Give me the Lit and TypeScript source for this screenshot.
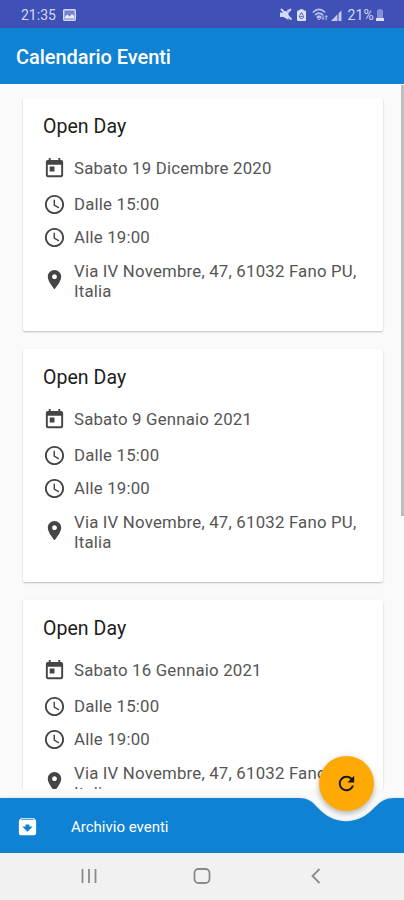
import { LitElement, html, css, svg } from "lit";
import { customElement, property } from "lit/decorators.js";

const paths = {
  event: "M19 3h-1V1h-2v2H8V1H6v2H5c-1.11 0-1.99.9-1.99 2L3 19c0 1.1.89 2 2 2h14c1.1 0 2-.9 2-2V5c0-1.1-.9-2-2-2zm0 16H5V8h14v11zM7 10h5v5H7z",
  clock: "M11.99 2C6.47 2 2 6.48 2 12s4.47 10 9.99 10C17.52 22 22 17.52 22 12S17.52 2 11.99 2zM12 20c-4.42 0-8-3.58-8-8s3.58-8 8-8 8 3.58 8 8-3.58 8-8 8zm.5-13H11v6l5.25 3.15.75-1.23-4.5-2.67z",
  place: "M12 2C8.13 2 5 5.13 5 9c0 5.25 7 13 7 13s7-7.75 7-13c0-3.87-3.13-7-7-7zm0 9.5c-1.38 0-2.5-1.12-2.5-2.5s1.12-2.5 2.5-2.5 2.5 1.12 2.5 2.5-1.12 2.5-2.5 2.5z",
  archive: "M20.54 5.23l-1.39-1.68C18.88 3.21 18.47 3 18 3H6c-.47 0-.88.21-1.16.55L3.46 5.23C3.17 5.57 3 6.02 3 6.5V19c0 1.1.9 2 2 2h14c1.1 0 2-.9 2-2V6.5c0-.48-.17-.93-.46-1.27zM12 17.5L6.5 12H10v-2h4v2h3.5L12 17.5zM5.12 5l.81-1h12l.94 1H5.12z",
  refresh: "M17.65 6.35C16.2 4.9 14.21 4 12 4c-4.42 0-7.99 3.58-7.99 8s3.57 8 7.99 8c3.73 0 6.84-2.55 7.73-6h-2.08c-.82 2.33-3.04 4-5.65 4-3.31 0-6-2.69-6-6s2.69-6 6-6c1.66 0 3.14.69 4.22 1.78L13 11h7V4l-2.35 2.35z",
};

const icon = (d: string, size: number) =>
  html`<svg width=${size} height=${size} viewBox="0 0 24 24" fill="currentColor">${svg`<path d=${d} />`}</svg>`;

@customElement("status-bar")
class StatusBar extends LitElement {
  static styles = css`
    :host { display: flex; align-items: center; height: 28px; flex: none; background: #3f51b5; color: #d3d8f5;
      padding: 1px 20px 0 21px; box-sizing: border-box; font-size: 14px; }
    .time { margin-right: 7px; }
    .space { flex: 1; }
    svg { display: block; }
    .icons { display: flex; align-items: center; }
    .mute { margin-right: 5px; }
    .saver { margin-right: 6px; }
    .wifi { margin-right: 3px; }
    .signal { margin-right: 5px; }
    .level { margin-right: 2px; letter-spacing: 0.2px; }
  `;
  render() {
    return html`
      <span class="time">21:35</span>
      <svg width="13" height="12" viewBox="0 0 13 12"><rect x=".7" y=".7" width="11.6" height="10.6" rx="1" fill="#7681cf" stroke="#d3d8f5" stroke-width="1.4"/><path d="M2 9.5V7.5L4.5 5.5 6.5 7.5 9 5l2.2 2v2.5z" fill="#e6e9fb"/></svg>
      <span class="space"></span>
      <div class="icons">
        <svg class="mute" width="12" height="13" viewBox="0 0 12 13"><path d="M0 4.500h3.500L8.500 1v11L3.500 9H0z" fill="#d3d8f5"/><path d="M5 1l7 7" stroke="#3f51b5" stroke-width="1.2"/><path d="M1 1L11.500 11.500M7 5l4-4" stroke="#d3d8f5" stroke-width="1.8"/></svg>
        <svg class="saver" width="9" height="12" viewBox="0 0 9 12"><path d="M2 1.500Q2.500 0 4.500 0T7 1.500H8q1 0 1 1V11q0 1-1 1H1q-1 0-1-1V2.500q0-1 1-1z" fill="#dfe3fa"/><path d="M4.500 3.500L2.800 6.500a2 2 0 1 0 3.400 0zM3.500 7.500h2" fill="none" stroke="#4e5dba"/></svg>
        <svg class="wifi" width="16" height="13" viewBox="0 0 16 13"><path d="M.8 4.500Q7-1.800 13.200 4.500M3 7q4-4 8 0M5 9.200q2-2 4 0" fill="none" stroke="#b9c1ec" stroke-width="1.7"/><path d="M7 12l2-2.500H5zM11 7v4M9.500 9.800l1.500 1.700 1.500-1.700M14.200 12V8M12.900 9l1.300-1.500L15.500 9" fill="none" stroke="#b9c1ec"/></svg>
        <svg class="signal" width="11" height="12" viewBox="0 0 11 12"><path d="M0 12L11 1v11z" fill="#7c87d1"/><path d="M0 12L6 6v6zM8 4l2-2v10H8z" fill="#c5ccf1"/></svg>
        <span class="level">21%</span>
        <svg width="8" height="12" viewBox="0 0 8 12"><path d="M2.500 1V0h3v1H7v9H1V1z" fill="#8690d5"/><path d="M0 9h8v3H0z" fill="#dfe3fa"/></svg>
      </div>`;
  }
}

@customElement("event-card")
class EventCard extends LitElement {
  @property() day = "";
  static styles = css`
    :host { display: block; flex: none; box-sizing: border-box; height: 233px; margin: 0 21px 18px 23px; padding: 17px 20px 0;
      background: #fff; border-radius: 2px; color: #555; box-shadow: 0 1px 2px rgba(0, 0, 0, 0.25); }
    h2 { margin: 0 0 17px; font: 400 19.5px/24px Roboto, sans-serif; letter-spacing: 0.05px; color: #1c1c1c; }
    .row { display: flex; align-items: center; font-size: 16.8px; line-height: 20px; letter-spacing: 0.2px; height: 24px; }
    .row + .row { margin-top: 9px; }
    .row.first { margin-bottom: 12px; }
    .row.place { height: 40px; margin-top: 12px; }
    .row.place svg { margin-top: -3px; }
    svg { display: block; flex: none; margin-right: 8px; color: #454545; }
  `;
  render() {
    return html`
      <h2>Open Day</h2>
      <div class="row first">${icon(paths.event, 23)}<span>${this.day}</span></div>
      <div class="row">${icon(paths.clock, 23)}<span>Dalle 15:00</span></div>
      <div class="row">${icon(paths.clock, 23)}<span>Alle 19:00</span></div>
      <div class="row place">${icon(paths.place, 23)}<span>Via IV Novembre, 47, 61032 Fano PU,<br />Italia</span></div>`;
  }
}

@customElement("bottom-bar")
class BottomBar extends LitElement {
  static styles = css`
    :host { display: block; position: relative; flex: none; height: 55px; color: #fff; }
    .shape { position: absolute; inset: 0; display: block; filter: drop-shadow(0 -1px 1px rgba(0, 0, 0, 0.08)); }
    .item { position: relative; display: flex; align-items: center; height: 55px; padding: 2px 0 0 16px; box-sizing: border-box; font-size: 15px; }
    .item svg { display: block; margin: -1px 32px 0 0; }
    .fab { position: absolute; left: 319px; top: -42px; width: 55px; height: 55px; border: 0; padding: 0; border-radius: 50%;
      background: #ffa905; color: #151515; display: flex; align-items: center; justify-content: center;
      box-shadow: 0 3px 5px rgba(0, 0, 0, 0.2), 0 1px 8px rgba(0, 0, 0, 0.1); }
  `;
  render() {
    return html`
      <svg class="shape" width="404" height="55" viewBox="0 0 404 55"><path d="M0 0H299C307 0 312 3 317 9C334 28 358 28 375 9C381 3 386 0 394 0H404V55H0Z" fill="#1082d4"/></svg>
      <div class="item">${icon(paths.archive, 23)}<span>Archivio eventi</span></div>
      <button class="fab" aria-label="Aggiorna">${icon(paths.refresh, 23)}</button>`;
  }
}

@customElement("app-root")
class AppRoot extends LitElement {
  static styles = css`
    :host { display: flex; flex-direction: column; height: 900px; overflow: hidden; background: #fafafa; font-family: Roboto, sans-serif; }
    header { flex: none; height: 56px; box-sizing: border-box; padding: 2px 16px 0; display: flex; align-items: center; background: #1082d4; color: #fff;
      font-size: 20px; font-weight: 500; letter-spacing: -0.05px; }
    main { position: relative; flex: none; height: 705px; overflow: hidden; display: flex; flex-direction: column; padding-top: 14px; box-sizing: border-box; }
    .thumb { position: absolute; right: 0; top: 1px; width: 3px; height: 431px; background: #bdbdbd; }
    .gap { flex: none; height: 9px; }
    nav { flex: 1; display: flex; justify-content: space-between; align-items: center; background: #f1f1f1; padding: 0 83px 2px 81px; }
    nav svg { display: block; fill: none; stroke: #8a8a8a; stroke-width: 1.8; }
    .home { margin-left: -4px; }
  `;
  render() {
    return html`
      <status-bar></status-bar>
      <header>Calendario Eventi</header>
      <main>
        ${["Sabato 19 Dicembre 2020", "Sabato 9 Gennaio 2021", "Sabato 16 Gennaio 2021"].map(
          (day) => html`<event-card .day=${day}></event-card>`
        )}
        <div class="thumb"></div>
      </main>
      <div class="gap"></div>
      <bottom-bar></bottom-bar>
      <nav>
        <svg width="16" height="16" viewBox="0 0 16 16"><path d="M1.500 1v14M8 1v14M14.500 1v14"/></svg>
        <svg class="home" width="18" height="16" viewBox="0 0 18 16"><rect x="1.500" y="1" width="15" height="14" rx="4"/></svg>
        <svg width="10" height="16" viewBox="0 0 10 16"><path d="M8.500 1L1.500 8l7 7"/></svg>
      </nav>`;
  }
}
